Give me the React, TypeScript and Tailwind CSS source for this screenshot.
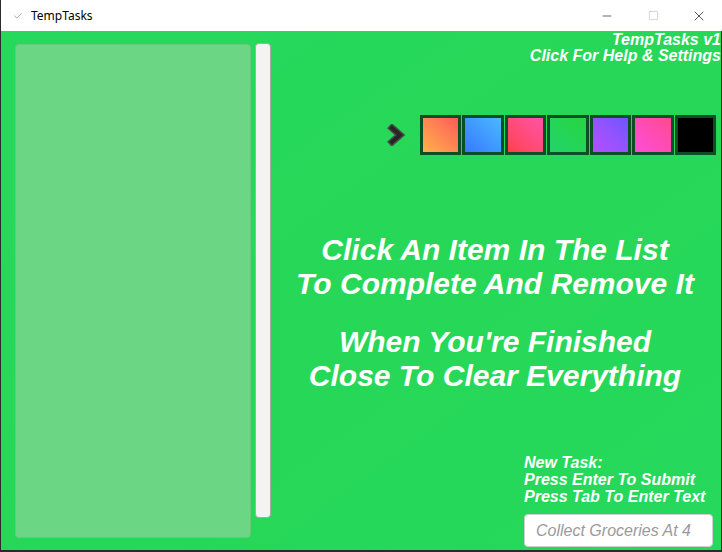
import { Minus, Square, X, Check } from "lucide-react";

const swatches = [
  "bg-gradient-to-tr from-[#ffb048] to-[#ff5858]",
  "bg-gradient-to-tr from-[#3a78ff] to-[#4cb8ff]",
  "bg-gradient-to-tr from-[#ff4048] to-[#ff52a8]",
  "bg-gradient-to-tr from-[#22d36a] to-[#26d63c]",
  "bg-gradient-to-tr from-[#b84cff] to-[#6e55ff]",
  "bg-gradient-to-tr from-[#ff4cd8] to-[#ff4890]",
  "bg-black",
];

const font = { fontFamily: '"Liberation Sans", Arial, sans-serif' };

export default function App() {
  return <div className="w-[722px] h-[552px] flex flex-col bg-[#2b2b2b] overflow-hidden">
      {/* title bar */}
      <div className="h-[31px] bg-white flex items-center border-l border-[#2b2b2b] shrink-0" style={{ fontFamily: '"Noto Sans", sans-serif' }}>
        <Check size={10} strokeWidth={1.5} className="ml-[12px] text-gray-500" />
        <span className="ml-[8px] text-[12px] text-black">TempTasks</span>
        <div className="ml-auto flex items-center h-full">
          <div className="w-[46px] h-full flex items-center justify-center"><Minus size={14} strokeWidth={1} /></div>
          <div className="w-[46px] h-full flex items-center justify-center"><Square size={11} strokeWidth={1} className="text-gray-400" /></div>
          <div className="w-[46px] h-full flex items-center justify-center"><X size={16} strokeWidth={1} /></div>
        </div>
      </div>

      {/* body */}
      <div className="flex-1 flex mx-px mb-[2px] bg-gradient-to-br from-[#25d95d] via-[#27d757] to-[#25d95c]" style={font}>
        <div className="ml-[14px] mt-[13px] mb-[12px] w-[236px] rounded-[4px] bg-[#6bd684] border border-[#62cc7b]" />
        <div className="ml-[4px] mt-[12px] mb-[32px] w-[16px] rounded-[4px] bg-[#f3f3f3] border border-[#a9a9a9]" />

        <div className="flex-1 flex flex-col text-white italic font-bold">
          <div className="text-right text-[16px] leading-[16px] pt-[1px] pr-0">
            <div>TempTasks v1</div>
            <div>Click For Help &amp; Settings</div>
          </div>

          <div className="mt-[51px] flex items-center justify-end pr-[5px] gap-[1px]">
            <svg width="20" height="22" viewBox="0 0 20 22" className="mr-[12px]">
              <polyline points="5,4 13,11 5,18" fill="none" stroke="#4a4a4a" strokeWidth="7" strokeLinejoin="miter" strokeLinecap="square" />
              <polyline points="5,4 13,11 5,18" fill="none" stroke="#262626" strokeWidth="4" strokeLinejoin="miter" strokeLinecap="square" />
            </svg>
            {swatches.map((s, i) => <div key={i} className="w-[41.5px] h-[40px] border-[3px] border-[#0c4f26]">
                <div className={"w-full h-full " + s} />
              </div>)}
          </div>

          <div className="mt-[78px] text-center text-[30px] leading-[34px] pr-[2px]">
            <div>Click An Item In The List</div>
            <div>To Complete And Remove It</div>
            <div className="mt-[24px]">When You're Finished</div>
            <div>Close To Clear Everything</div>
          </div>

          <div className="mt-auto ml-[253px] mb-[3px] pr-[8px]">
            <div className="text-[16px] leading-[17px]">
              <div>New Task:</div>
              <div>Press Enter To Submit</div>
              <div>Press Tab To Enter Text</div>
            </div>
            <div className="mt-[9px] h-[33px] w-[189px] bg-white rounded-[4px] border border-[#cfcfcf] flex items-center px-[11px]">
              <span className="text-[16px] font-normal italic text-[#9a9a9a]">Collect Groceries At 4</span>
            </div>
          </div>
        </div>
      </div>
    </div>;
}
